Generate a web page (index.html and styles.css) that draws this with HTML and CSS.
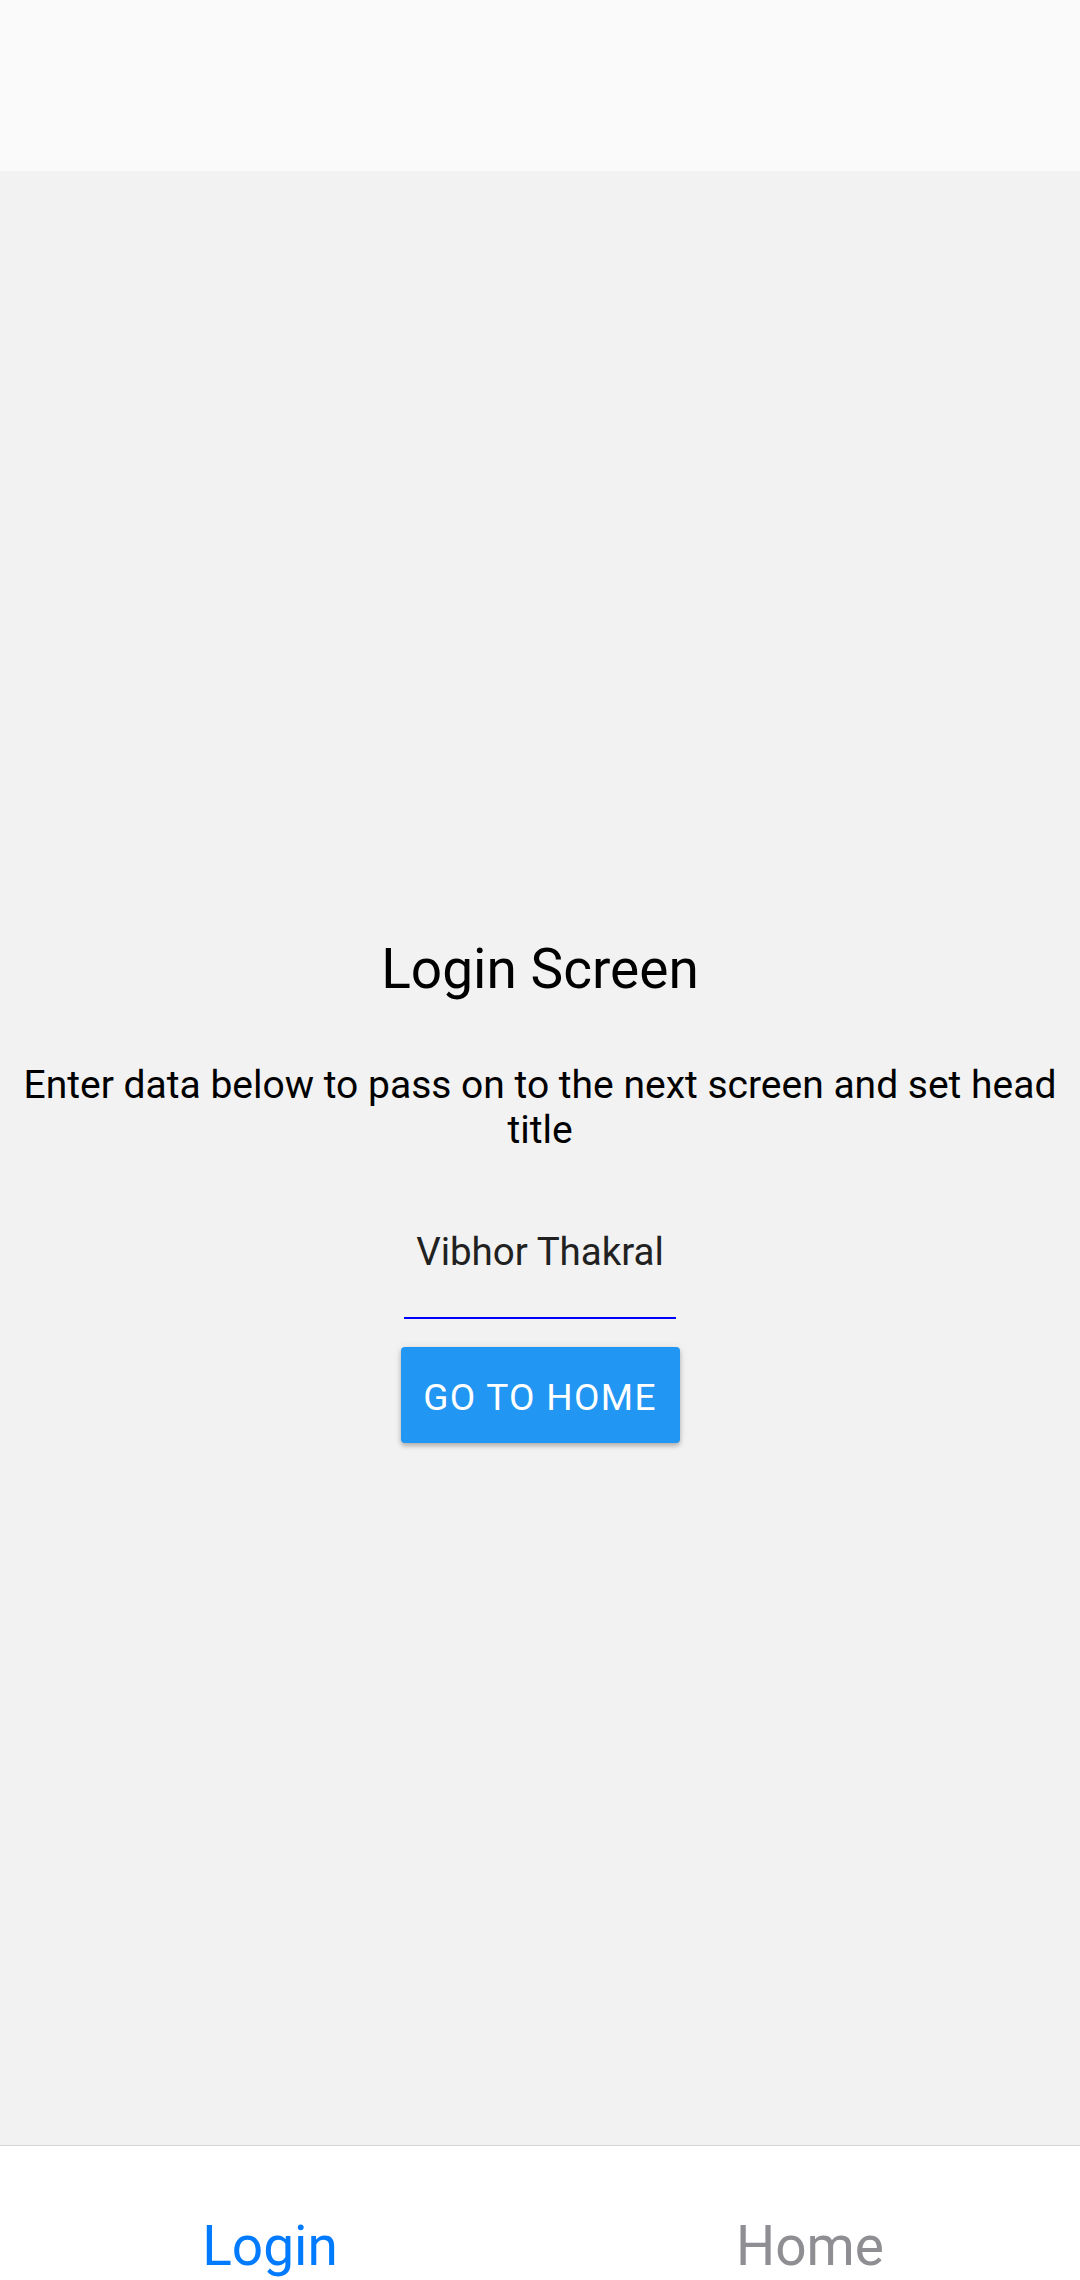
FILE: index.html
```html
<!DOCTYPE html>
<html>
<head>
<meta charset="utf-8">
<link rel="stylesheet" href="styles.css">
</head>
<body>
<div class="app">
  <div class="header"></div>
  <div class="main">
    <div class="title">Login Screen</div>
    <div class="subtitle">Enter data below to pass on to the next screen and set head title</div>
    <div class="input">Vibhor Thakral</div>
    <div class="button">GO TO HOME</div>
  </div>
  <div class="tabbar">
    <div class="tab active">Login</div>
    <div class="tab">Home</div>
  </div>
</div>
</body>
</html>
```

FILE: styles.css
```css
html, body {
  margin: 0;
  padding: 0;
}
body {
  font-family: Roboto, "Noto Sans", sans-serif;
  width: 1080px;
  height: 2280px;
  overflow: hidden;
}
.app {
  display: flex;
  flex-direction: column;
  height: 2280px;
}
.header {
  height: 171px;
  background: #fafafa;
  flex: none;
}
.main {
  flex: 1;
  background: #f2f2f2;
  display: flex;
  flex-direction: column;
  align-items: center;
  justify-content: center;
  padding-top: 63px;
  box-sizing: border-box;
}
.title {
  font-size: 55px;
  line-height: 64px;
  color: #000;
}
.subtitle {
  margin-top: 62px;
  font-size: 39px;
  line-height: 45px;
  color: #000;
  text-align: center;
  padding: 0 20px;
}
.input {
  margin-top: 76px;
  width: 272px;
  text-align: center;
  font-size: 38.5px;
  line-height: 45px;
  color: #212121;
  padding-bottom: 43px;
  border-bottom: 2px solid #0000ff;
}
.button {
  margin-top: 28px;
  width: 279px;
  height: 96px;
  box-sizing: border-box;
  background: #2196f3;
  color: #fff;
  border-radius: 4px;
  font-size: 37px;
  letter-spacing: 1.3px;
  display: flex;
  align-items: center;
  justify-content: center;
  padding-top: 6px;
  box-shadow: 0 3px 4px rgba(0,0,0,0.22), 0 1px 8px rgba(0,0,0,0.1);
}
.tabbar {
  height: 135px;
  flex: none;
  box-sizing: border-box;
  background: #fff;
  border-top: 1px solid #d6d6d6;
  display: flex;
}
.tab {
  flex: 1;
  text-align: center;
  font-size: 55px;
  line-height: 64px;
  padding-top: 68px;
  color: #8e8e93;
}
.tab.active {
  color: #007aff;
}
```
